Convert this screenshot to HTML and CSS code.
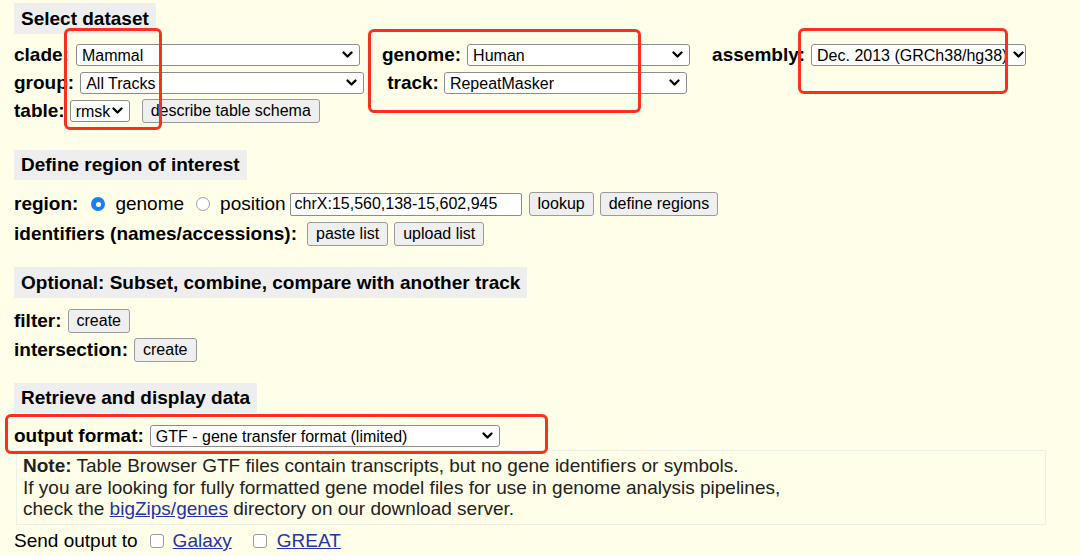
FILE: index.html
```html
<!DOCTYPE html>
<html>
<head>
    <title>Table Browser</title>
    <link rel="stylesheet" href="styles.css">
</head>
<body>
<div class="page">
    <div class="section-title">Select dataset</div>
    <div class="row first">
        <span class="label">clade:</span>
        <span class="sel gap-7" style="width: 284px">
            <select><option>Mammal</option></select>
            <svg class="chev" width="11" height="8" viewBox="0 0 11 8"><path d="M1.5 1.5l4 4 4-4" /></svg>
        </span>
        <span class="label gap-22">genome:</span>
        <span class="sel gap-6" style="width: 223px">
            <select><option>Human</option></select>
            <svg class="chev" width="11" height="8" viewBox="0 0 11 8"><path d="M1.5 1.5l4 4 4-4" /></svg>
        </span>
        <span class="label gap-22">assembly:</span>
        <span class="sel gap-6" style="width: 215px">
            <select><option>Dec. 2013 (GRCh38/hg38)</option></select>
            <svg class="chev tight" width="11" height="8" viewBox="0 0 11 8"><path d="M1.5 1.5l4 4 4-4" /></svg>
        </span>
    </div>
    <div class="row">
        <span class="label">group:</span>
        <span class="sel gap-6" style="width: 284px">
            <select><option>All Tracks</option></select>
            <svg class="chev" width="11" height="8" viewBox="0 0 11 8"><path d="M1.5 1.5l4 4 4-4" /></svg>
        </span>
        <span class="label gap-23">track:</span>
        <span class="sel gap-5" style="width: 243px">
            <select><option>RepeatMasker</option></select>
            <svg class="chev" width="11" height="8" viewBox="0 0 11 8"><path d="M1.5 1.5l4 4 4-4" /></svg>
        </span>
    </div>
    <div class="row tall tight-row">
        <span class="label">table:</span>
        <span class="sel gap-5" style="width: 60px">
            <select><option>rmsk</option></select>
            <svg class="chev" width="11" height="8" viewBox="0 0 11 8"><path d="M1.5 1.5l4 4 4-4" /></svg>
        </span>
        <button class="button gap-12">describe table schema</button>
    </div>

    <div class="section-title second">Define region of interest</div>
    <div class="row tall first">
        <span class="label">region:</span>
        <span class="radio checked gap-13"></span>
        <span class="text gap-10">genome</span>
        <span class="radio gap-12"></span>
        <span class="text gap-10">position</span>
        <input class="field gap-4" type="text" value="chrX:15,560,138-15,602,945">
        <button class="button gap-7">lookup</button>
        <button class="button gap-6">define regions</button>
    </div>
    <div class="row tall">
        <span class="label">identifiers (names/accessions):</span>
        <button class="button gap-10">paste list</button>
        <button class="button gap-6">upload list</button>
    </div>

    <div class="section-title third">Optional: Subset, combine, compare with another track</div>
    <div class="row tall first">
        <span class="label">filter:</span>
        <button class="button gap-6">create</button>
    </div>
    <div class="row tall tight-row">
        <span class="label">intersection:</span>
        <button class="button gap-6">create</button>
    </div>

    <div class="section-title fourth">Retrieve and display data</div>
    <div class="row first">
        <span class="label">output format:</span>
        <span class="sel gap-6" style="width: 350px">
            <select><option>GTF - gene transfer format (limited)</option></select>
            <svg class="chev" width="11" height="8" viewBox="0 0 11 8"><path d="M1.5 1.5l4 4 4-4" /></svg>
        </span>
    </div>
    <div class="note">
        <b>Note:</b> Table Browser GTF files contain transcripts, but no gene identifiers or symbols.<br>
        If you are looking for fully formatted gene model files for use in genome analysis pipelines,<br>
        check the <a href="#">bigZips/genes</a> directory on our download server.
    </div>
    <div class="row send">
        <span class="text">Send output to</span>
        <span class="check gap-12"></span>
        <a class="gap-9" href="#">Galaxy</a>
        <span class="check gap-21"></span>
        <a class="gap-10" href="#">GREAT</a>
    </div>

    <!-- red annotation boxes -->
    <div class="mark" style="left: 64px; top: 28px; width: 98px; height: 102px"></div>
    <div class="mark" style="left: 368px; top: 29px; width: 273px; height: 84px"></div>
    <div class="mark" style="left: 798px; top: 28px; width: 210px; height: 66px"></div>
    <div class="mark" style="left: 5px; top: 414px; width: 543px; height: 40px"></div>
</div>
</body>
</html>
```

FILE: styles.css
```css
body {
    margin: 0;
    background-color: #fffee8;
    font-family: "Liberation Sans", Arial, sans-serif;
    color: #000;
}
.page {
    position: relative;
    height: 556px;
    padding: 3px 0 0 14px;
    box-sizing: border-box;
    overflow: hidden;
}
.section-title {
    display: inline-block;
    background-color: #eeeeee;
    font-weight: bold;
    font-size: 19px;
    height: 31px;
    line-height: 31px;
    padding: 0 7px;
}
.section-title.second { margin-top: 27px; height: 30px; line-height: 30px; }
.section-title.third { margin-top: 21px; }
.section-title.fourth { margin-top: 21px; height: 30px; line-height: 30px; }

.row {
    display: flex;
    align-items: center;
    height: 22px;
    margin-top: 6px;
    white-space: nowrap;
}
.row.tall { height: 24px; }
.row.first { margin-top: 10px; }
.row.tight-row { margin-top: 5px; }
.section-title.second + .row.first,
.section-title.fourth + .row.first { margin-top: 12px; }
.section-title.third + .row.first { margin-top: 11px; }

.label {
    font-weight: bold;
    font-size: 19px;
}
.text {
    font-size: 19px;
}

.gap-4 { margin-left: 4px; }
.gap-5 { margin-left: 5px; }
.gap-6 { margin-left: 6px; }
.gap-7 { margin-left: 7px; }
.gap-8 { margin-left: 8px; }
.gap-9 { margin-left: 9px; }
.gap-10 { margin-left: 10px; }
.gap-12 { margin-left: 12px; }
.gap-13 { margin-left: 13px; }
.gap-21 { margin-left: 21px; }
.gap-22 { margin-left: 22px; }
.gap-23 { margin-left: 23px; }

.sel {
    position: relative;
    display: inline-block;
    height: 22px;
}
.sel select {
    -webkit-appearance: none;
    appearance: none;
    width: 100%;
    height: 22px;
    margin: 0;
    padding: 0 10px 0 5px;
    background: #fff;
    border: 1px solid #8c8c8c;
    border-radius: 3px;
    font-family: "Liberation Sans", Arial, sans-serif;
    font-size: 16px;
    color: #000;
}
.chev {
    position: absolute;
    right: 7px;
    top: 7px;
    fill: none;
    stroke: #000;
    stroke-width: 2.3;
    stroke-linecap: round;
    stroke-linejoin: round;
}
.chev.tight { right: 2px; }

.button {
    height: 24px;
    padding: 0 8px;
    background-color: #efefef;
    border: 1px solid #9a9a9a;
    border-radius: 3px;
    font-family: "Liberation Sans", Arial, sans-serif;
    font-size: 16px;
    color: #000;
}
.field {
    width: 232px;
    height: 23px;
    box-sizing: border-box;
    padding: 0 4px;
    background: #fff;
    border: 1px solid #8c8c8c;
    border-radius: 2px;
    font-family: "Liberation Sans", Arial, sans-serif;
    font-size: 16px;
    color: #000;
}

.radio {
    width: 14px;
    height: 14px;
    box-sizing: border-box;
    border: 1px solid #a0a0a0;
    border-radius: 50%;
    background: #fff;
}
.radio.checked {
    border: none;
    background: #1a7ef5;
    position: relative;
}
.radio.checked::after {
    content: "";
    position: absolute;
    left: 4.5px;
    top: 4.5px;
    width: 5px;
    height: 5px;
    border-radius: 50%;
    background: #fff;
}
.check {
    width: 14px;
    height: 14px;
    box-sizing: border-box;
    border: 1px solid #9a9a9a;
    border-radius: 3px;
    background: #fff;
}

.note {
    margin: 3px 0 0 2px;
    width: 1030px;
    box-sizing: border-box;
    border: 1px solid #efefe4;
    padding: 4px 6px 4px 6px;
    font-size: 19px;
    line-height: 21.5px;
    color: #222;
}
a {
    color: #2433a8;
}
.row.send {
    margin-top: 5px;
}
.row.send a {
    font-size: 19px;
}

.mark {
    position: absolute;
    border: 3px solid #f5321e;
    border-radius: 6px;
    box-sizing: border-box;
}
```
